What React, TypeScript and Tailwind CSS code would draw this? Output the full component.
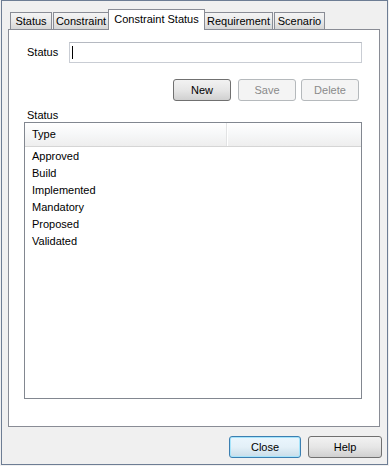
import React from 'react'

const tabs = [
    { name: 'Status', w: 'w-[42px]' },
    { name: 'Constraint', w: 'w-[56px]' },
    { name: 'Constraint Status', w: 'w-[97px]', active: true },
    { name: 'Requirement', w: 'w-[69px]' },
    { name: 'Scenario', w: 'w-[51px]' },
]

const statuses = ['Approved', 'Build', 'Implemented', 'Mandatory', 'Proposed', 'Validated']

const App = () => {
    return (
        <div className="w-[389px] h-[466px] bg-[#f0f0f0] pl-[1px] text-[11px] text-black" style={{ fontFamily: '"Liberation Sans", Arial, sans-serif' }}>
            <div className="w-[387px] h-[465px] border border-[#6d7d94] flex flex-col pl-[6px] pt-[8px]">
                {/* tab strip */}
                <div className="flex items-end h-[20px] pl-[2px]">
                    {tabs.map((tab, i) => (
                        tab.active ? (
                            <div key={tab.name} className={`${tab.w} h-[21px] -mb-[1px] -ml-[1px] relative z-10 bg-white border border-b-0 border-[#898c95] flex items-start justify-center pt-[2px] leading-[14px]`}>
                                {tab.name}
                            </div>
                        ) : (
                            <div key={tab.name} className={`${tab.w} h-[17px] ${i === 1 || i === 4 ? 'ml-[1px]' : ''} ${i === 3 ? '-ml-[1px]' : ''} border border-b-0 border-[#898c95] bg-gradient-to-b from-[#f4f4f4] via-[#e9e9e9] to-[#d6d6d6] flex items-center justify-center leading-[14px]`}>
                                {tab.name}
                            </div>
                        )
                    ))}
                </div>

                {/* panel */}
                <div className="w-[372px] h-[398px] bg-white border border-[#898c95] flex flex-col pl-[15px] pt-[12px]">
                    <div className="flex items-center h-[21px]">
                        <span className="w-[45px] pl-[3px]">Status</span>
                        <div className="w-[293px] h-[21px] border border-[#c9cdd4] border-t-[#b5b9c1] flex items-center pl-[2px]">
                            <div className="w-[1px] h-[13px] bg-black" />
                        </div>
                    </div>

                    <div className="flex justify-end w-[335px] mt-[16px]">
                        <button className="w-[58px] h-[22px] mr-[7px] rounded-[3px] border border-[#707070] bg-gradient-to-b from-[#f2f2f2] via-[#e6e6e6] to-[#d0d0d0] leading-[14px]">New</button>
                        <button className="w-[58px] h-[22px] mr-[5px] rounded-[3px] border border-[#b5b9bc] bg-[#f4f4f4] text-[#8a8a8a] leading-[14px]">Save</button>
                        <button className="w-[58px] h-[22px] rounded-[3px] border border-[#b5b9bc] bg-[#f4f4f4] text-[#8a8a8a] leading-[14px]">Delete</button>
                    </div>

                    <div className="h-[14px] leading-[14px] mt-[7px] pl-[3px]">Status</div>

                    <div className="w-[338px] h-[277px] border border-[#828790] flex flex-col">
                        <div className="flex h-[24px] border-b border-[#d5d5d5] bg-gradient-to-b from-white via-[#f6f7f8] to-[#eeeeee]">
                            <div className="w-[202px] border-r border-[#e2e3e4] pl-[7px] flex items-center">Type</div>
                            <div className="flex-1 border-l border-white" />
                        </div>
                        <div className="pt-[1px]">
                            {statuses.map((s) => (
                                <div key={s} className="h-[17px] leading-[17px] pl-[7px]">{s}</div>
                            ))}
                        </div>
                    </div>
                </div>

                {/* footer */}
                <div className="flex justify-end gap-[7px] mt-[9px] pr-[5px]">
                    <button className="w-[72px] h-[22px] rounded-[3px] border border-[#3c7fb1] bg-gradient-to-b from-[#eaf6fd] via-[#e3f0f8] to-[#c9dde9] shadow-[inset_0_0_0_1px_#a6e4fb] leading-[14px]">Close</button>
                    <button className="w-[74px] h-[22px] rounded-[3px] border border-[#707070] bg-gradient-to-b from-[#f2f2f2] via-[#e6e6e6] to-[#d0d0d0] leading-[14px]">Help</button>
                </div>
            </div>
        </div>
    )
}

export default App
